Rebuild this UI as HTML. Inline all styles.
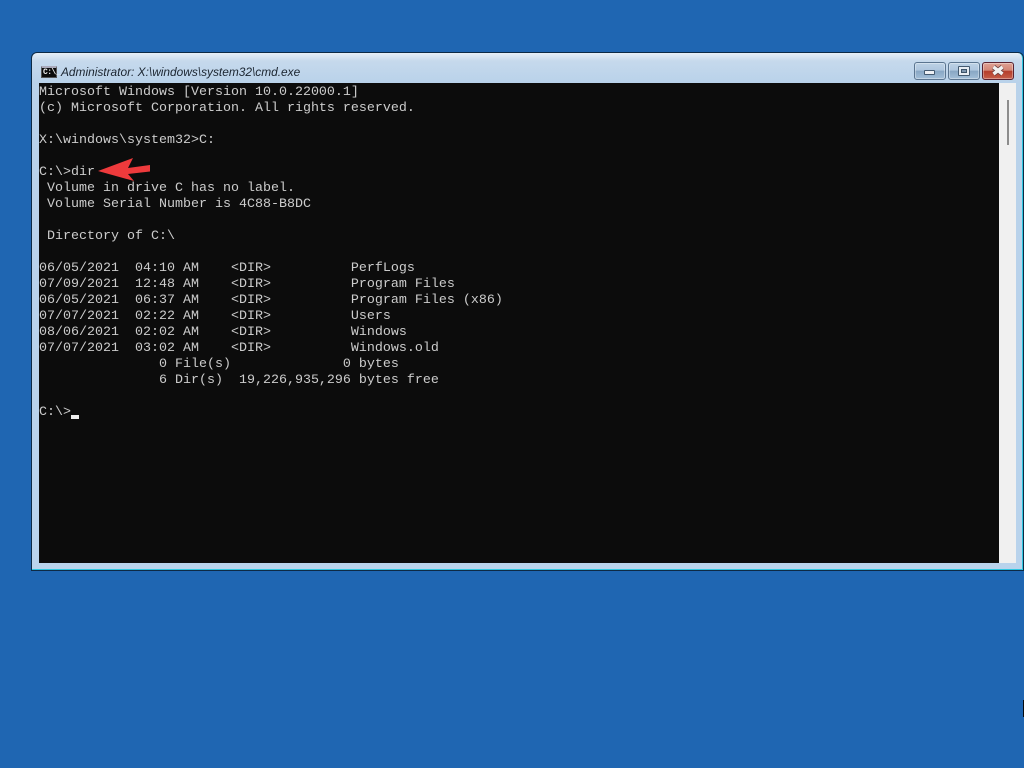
<!DOCTYPE html>
<html><head><meta charset="utf-8"><style>
html,body{margin:0;padding:0;width:1024px;height:768px;overflow:hidden;background:#1f66b2}
div{position:absolute;box-sizing:border-box}
pre{position:absolute;left:39px;top:85px;margin:0;font:13.33px/16px "Liberation Mono",monospace;color:#ccc;letter-spacing:0}
.b{top:62px;height:18px;border:1px solid #5b7590;border-radius:3px;box-shadow:inset 0 0 0 1px rgba(255,255,255,.35);background:linear-gradient(#bdd2e6 0,#aec6de 45%,#88a7c4 50%,#a3bed8 100%)}
</style></head><body>
<div style="left:31px;top:52px;width:993px;height:519px;background:#0d2a45;border-radius:6px 6px 0 0"></div>
<div style="left:32px;top:53px;width:991px;height:517px;background:linear-gradient(#e6eff7 0,#c6d9ec 8px,#b9d2ea 30px,#b9d3ec 100%);border-radius:5px 5px 0 0;border-right:1px solid #2fc6e0;border-bottom:1px solid #2fc6e0"></div>
<div style="left:39px;top:83px;width:960px;height:480px;background:#0c0c0c"></div>
<div style="left:999px;top:83px;width:17px;height:480px;background:#f0f0f0"></div>
<div style="left:1007px;top:100px;width:2px;height:45px;background:#8c8c8c"></div>
<div style="left:1023px;top:700px;width:1px;height:17px;background:#050a10"></div>

<div style="left:41px;top:66px;width:16px;height:12px;background:#0c0c0c;border:1px solid #555;border-top:2px solid #aab"></div>
<div style="left:43px;top:68px;font:bold 8px/9px 'Liberation Mono',monospace;color:#eee;letter-spacing:-.6px">C:\_</div>
<div style="left:61px;top:65px;font:italic 11.9px/15px 'Liberation Sans',sans-serif;color:#1b2530;white-space:nowrap">Administrator: X:\windows\system32\cmd.exe</div>

<div class="b" style="left:914px;width:32px"></div>
<div style="left:924px;top:70px;width:11px;height:5px;background:#eef0f4;border:1px solid #445a70;border-radius:1px"></div>
<div class="b" style="left:948px;width:32px"></div>
<div style="left:958px;top:66px;width:12px;height:10px;background:#e8edf3;border:1px solid #445a70;border-radius:1px"></div>
<div style="left:961px;top:69px;width:6px;height:4px;background:#7d95ae;border:1px solid #3d5368"></div>
<div class="b" style="left:982px;width:32px;border-color:#5a2230;background:linear-gradient(#dfa294 0,#d38676 45%,#b53e2c 52%,#c65e4a 100%)"></div>
<svg style="position:absolute;left:990px;top:64px" width="16" height="14" viewBox="0 0 16 14"><path d="M3.5 3 L12.5 10 M12.5 3 L3.5 10" stroke="#6a4040" stroke-width="5" fill="none"/><path d="M3.5 3 L12.5 10 M12.5 3 L3.5 10" stroke="#f2f2f2" stroke-width="3.4" fill="none"/></svg>

<pre>Microsoft Windows [Version 10.0.22000.1]
(c) Microsoft Corporation. All rights reserved.

X:\windows\system32&gt;C:

C:\&gt;dir
 Volume in drive C has no label.
 Volume Serial Number is 4C88-B8DC

 Directory of C:\

06/05/2021  04:10 AM    &lt;DIR&gt;          PerfLogs
07/09/2021  12:48 AM    &lt;DIR&gt;          Program Files
06/05/2021  06:37 AM    &lt;DIR&gt;          Program Files (x86)
07/07/2021  02:22 AM    &lt;DIR&gt;          Users
08/06/2021  02:02 AM    &lt;DIR&gt;          Windows
07/07/2021  03:02 AM    &lt;DIR&gt;          Windows.old
               0 File(s)              0 bytes
               6 Dir(s)  19,226,935,296 bytes free

C:\&gt;</pre>
<div style="left:71px;top:415px;width:8px;height:4px;background:#eee"></div>
<svg style="position:absolute;left:0;top:0" width="1024" height="768"><path d="M98 171 L133 158 L128 168 L150 165 L150 171.5 L128 174 L134 181 Z" fill="#ee3a3c"/></svg>
</body></html>
